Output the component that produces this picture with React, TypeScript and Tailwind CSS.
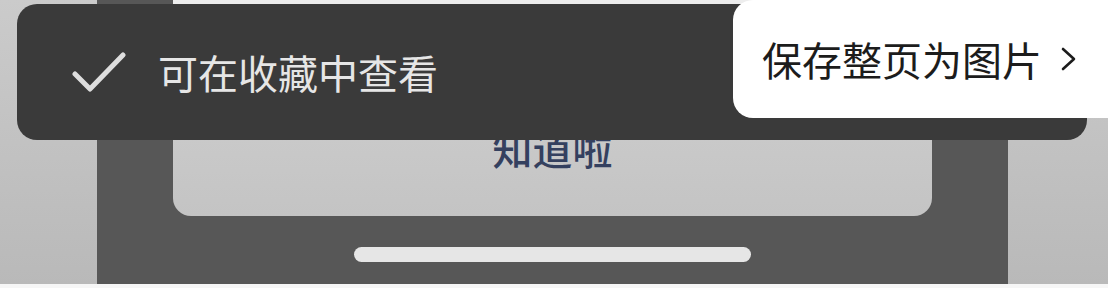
const cjk = { fontFamily: '"Noto Sans CJK SC", "Noto Sans", sans-serif' }

function Check() {
  return (
    <svg width="54" height="40" viewBox="0 0 54 40" fill="none">
      <polyline points="3,22 18,37 51,3" stroke="#dedede" strokeWidth="5" strokeLinecap="round" strokeLinejoin="round" />
    </svg>
  )
}

function Chevron() {
  return (
    <svg width="18" height="26" viewBox="0 0 18 26" fill="none">
      <polyline points="3,3 14,13 3,23" stroke="#1c1c1c" strokeWidth="2.6" strokeLinecap="round" strokeLinejoin="round" />
    </svg>
  )
}

export default function App() {
  return (
    <div className="relative w-[1108px] h-[288px] overflow-hidden bg-[#f6f6f6]" style={cjk}>
      {/* page behind the toast */}
      <div className="flex h-[284px]">
        <div className="w-[97px] bg-gradient-to-b from-[#cbcbcb] to-[#b9b9b9]" />
        <div className="w-[911px] bg-[#575757] px-[76px] flex flex-col">
          <div className="h-[216px] rounded-b-[18px] bg-gradient-to-b from-[#d2d2d2] to-[#c4c4c4] flex flex-col overflow-hidden">
            <div className="h-[5px] bg-[#ededed]" />
            <div className="pt-[119px] text-center text-[40px] leading-[48px] font-medium text-[#34405f]">知道啦</div>
          </div>
          <div className="mt-[31px] mx-auto w-[397px] h-[15px] rounded-full bg-[#e6e6e6]" />
        </div>
        <div className="flex-1 bg-gradient-to-b from-[#cbcbcb] to-[#b9b9b9]" />
      </div>

      {/* toast */}
      <div className="absolute left-[17px] top-[4px] w-[1070px] h-[136px] rounded-[20px] bg-[#3a3a3a] flex items-center pl-[55px]">
        <Check />
        <span className="ml-[32px] text-[40px] leading-none text-[#e6e6e6]">可在收藏中查看</span>
      </div>

      {/* save as image action */}
      <div className="absolute left-[733px] top-0 right-0 h-[118px] rounded-l-[20px] bg-white flex items-center pl-[29px]">
        <span className="text-[40px] leading-none text-[#1c1c1c]">保存整页为图片</span>
        <span className="ml-[18px] flex">
          <Chevron />
        </span>
      </div>
    </div>
  )
}
